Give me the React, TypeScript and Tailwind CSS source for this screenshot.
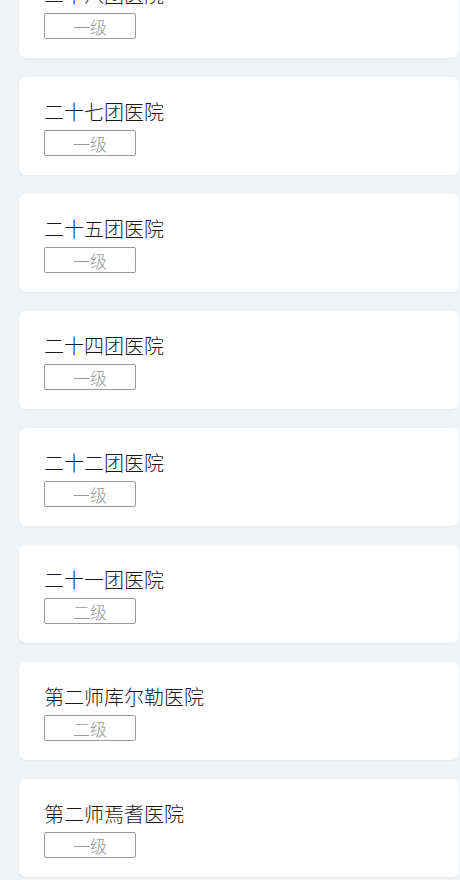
import React from "react";

const items: { name: string; level: string }[] = [
  { name: "二十八团医院", level: "一级" },
  { name: "二十七团医院", level: "一级" },
  { name: "二十五团医院", level: "一级" },
  { name: "二十四团医院", level: "一级" },
  { name: "二十二团医院", level: "一级" },
  { name: "二十一团医院", level: "二级" },
  { name: "第二师库尔勒医院", level: "二级" },
  { name: "第二师焉耆医院", level: "一级" },
];

export default function App() {
  return (
    <div
      className="w-[460px] h-[880px] overflow-hidden bg-[#eff3f6]"
      style={{ fontFamily: '"Noto Sans CJK SC", "Noto Sans", sans-serif' }}
    >
      <div className="-mt-[40px] pl-[19px] pr-[1px] flex flex-col gap-[19px]">
        {items.map((it, i) => (
          <div
            key={i}
            className="h-[98px] bg-white rounded-[7px] shadow-[0_1px_2px_rgba(0,0,0,0.05)] pl-[25px] pt-[21px] flex flex-col"
          >
            <div className="text-[20px] leading-[28px] font-light text-[#1a1a1a]">{it.name}</div>
            <div className="mt-[4px] w-[92px] h-[26px] border border-[#9a9a9a] rounded-[2px] flex items-center justify-center text-[17px] leading-none font-light text-[#999999]">
              {it.level}
            </div>
          </div>
        ))}
      </div>
    </div>
  );
}
